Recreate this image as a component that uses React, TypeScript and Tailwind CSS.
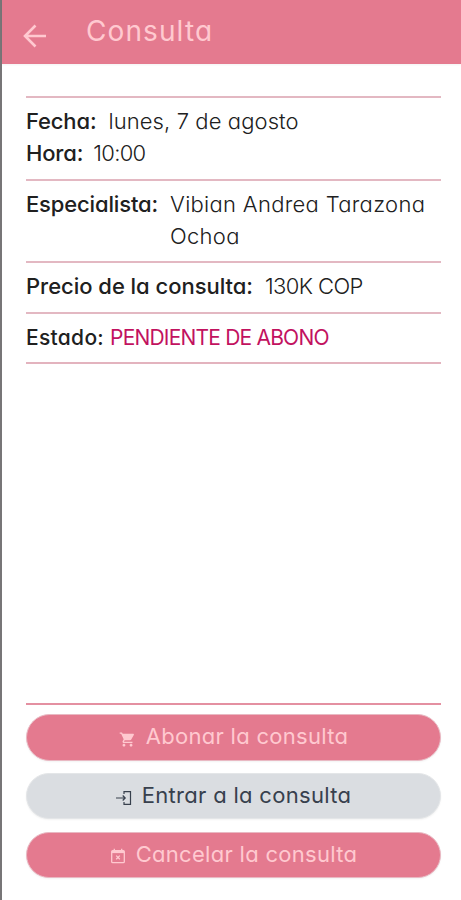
import type { ReactNode } from "react";
import { MdShoppingCart } from "react-icons/md";

function App() {
    return (
        <div className="flex h-[900px] w-[461px] flex-col border-l-2 border-[#777577] bg-white font-['Inter',sans-serif] text-[#202020] [font-feature-settings:'cv11']">
            <header className="flex h-16 shrink-0 items-center bg-[#e47a8f] text-[#ffc9d0] shadow-xs">
                <svg className="mt-2 ml-5 h-6 w-6" viewBox="0 0 24 24" fill="none" stroke="currentColor" strokeWidth="2.6">
                    <path d="M24.5 12H3M13.5 1.5 3 12l10.5 10.5" />
                </svg>
                <h1 className="mb-0.5 ml-10 text-[28px] leading-8 tracking-[1.1px]">Consulta</h1>
            </header>

            <main className="mr-5 ml-6 flex flex-1 flex-col pt-8">
                <Section>
                    <Row label="Fecha:">
                        <span className="tracking-[0.1px]">lunes, 7 de agosto</span>
                    </Row>
                    <Row label="Hora:">
                        <span className="-ml-0.5 tracking-[-0.7px]">10:00</span>
                    </Row>
                </Section>
                <Section>
                    <Row label="Especialista:">
                        <span className="tracking-[0.3px]">
                            Vibian Andrea Tarazona
                            <br />
                            Ochoa
                        </span>
                    </Row>
                </Section>
                <Section>
                    <Row label="Precio de la consulta:" labelClass="tracking-[-0.03px]">
                        <span className="tracking-[-0.6px]">130K COP</span>
                    </Row>
                </Section>
                <section className="border-t-2 border-[#e3b8c2] pt-[8.75px] pb-[7.65px]">
                    <div className="flex text-[21px] leading-8">
                        <span className="mr-1.5 font-medium tracking-[0.3px]">Estado:</span>
                        <span className="tracking-[-0.8px] text-[#c2125f]">PENDIENTE DE ABONO</span>
                    </div>
                </section>
                <hr className="border-t-2 border-[#e3b3be]" />

                <div className="mt-auto mb-[22px] flex flex-col gap-[12.25px] border-t-2 border-[#e490a1] pt-[9px]">
                    <Button className="border-[#e9b9c3] bg-[#e47a8f] text-[#ffc9d0]">
                        <MdShoppingCart className="mt-1 h-[17px] w-[17px]" />
                        <span className="mb-0.5 tracking-[0.3px]">Abonar la consulta</span>
                    </Button>
                    <Button className="border-[#e4e6e8] bg-[#dadde1] text-[#37404d]">
                        <svg className="mt-1 h-4 w-4" viewBox="0 0 16 16" fill="none" stroke="currentColor" strokeWidth="1.2">
                            <path d="M0 8h9.5M6.7 5.5 9.2 8l-2.5 2.5M8 4V1.7h6.5v12.6H8V12" />
                        </svg>
                        <span className="mb-0.5 tracking-[0.3px]">Entrar a la consulta</span>
                    </Button>
                    <Button className="border-[#e9b9c3] bg-[#e47a8f] text-[#ffc9d0]">
                        <svg className="mt-0.5 h-4 w-4" viewBox="0 0 16 16" fill="none" stroke="currentColor" strokeWidth="1.3">
                            <rect x="1.7" y="2.7" width="12.6" height="12" rx="1" />
                            <path d="M4.3.8V3M11.7.8V3M6.2 7.6l3.6 3.6M9.8 7.6l-3.6 3.6" />
                            <path d="M1.7 4h12.6" strokeWidth="2.2" />
                        </svg>
                        <span className="tracking-[0.3px]">Cancelar la consulta</span>
                    </Button>
                </div>
            </main>
        </div>
    );
}

function Section({ children }: { children: ReactNode }) {
    return <section className="border-t-2 border-[#e3b8c2] pt-[7.25px] pb-[9.25px]">{children}</section>;
}

type RowProps = {
    label: string;
    labelClass?: string;
    children: ReactNode;
};

function Row({ label, labelClass = "tracking-[-0.15px]", children }: RowProps) {
    return (
        <div className="flex text-[22px] leading-8">
            <span className={`mr-3 font-medium ${labelClass}`}>{label}</span>
            <span className="font-light">{children}</span>
        </div>
    );
}

function Button({ className, children }: { className: string; children: ReactNode }) {
    return (
        <button
            type="button"
            className={`flex h-[46.5px] items-center justify-center gap-[10px] rounded-full border text-[22px] shadow-xs ${className}`}
        >
            {children}
        </button>
    );
}

export default App;
